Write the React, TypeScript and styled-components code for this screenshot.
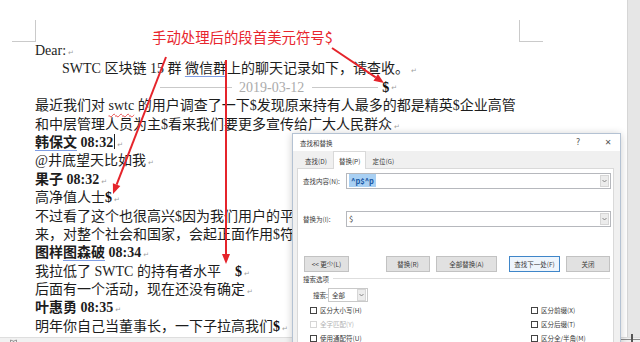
import React from "react";
import styled, { createGlobalStyle } from "styled-components";

const GlobalStyle = createGlobalStyle`
  html, body {
    margin: 0;
    padding: 0;
    background: #fff;
  }
  body {
    overflow: hidden;
  }
  * {
    box-sizing: border-box;
  }
`;

const Screen = styled.div`
  position: relative;
  width: 640px;
  height: 342px;
  overflow: hidden;
  display: flex;
  flex-direction: column;
  background: #fff;
`;

const Main = styled.div`
  height: 337px;
  flex-shrink: 0;
  display: flex;
`;

const Workspace = styled.div`
  flex: 1;
  min-width: 0;
  overflow: hidden;
  padding-top: 20px;
`;

const Gutter = styled.div`
  width: 13px;
  background: #e6e6e6;
  border-left: 1px solid #d6d6d6;
`;

const StatusBar = styled.div`
  height: 22px;
  flex-shrink: 0;
  display: flex;
  align-items: flex-start;
  justify-content: space-between;
  padding: 1px 0 0 10px;
  background: #f1f1f1;
  border-top: 1px solid #dedede;
`;

const ZoomSlider = styled.div`
  position: relative;
  width: 20px;
  height: 1px;
  background: #8a8a8a;

  &::after {
    content: "";
    position: absolute;
    left: 11px;
    top: -5px;
    width: 2px;
    height: 9px;
    background: #555;
  }
`;

/* ---------- document ---------- */

const MarginMarks = styled.div`
  display: flex;
  justify-content: space-between;
  width: 543px;
  padding-left: 12px;
`;

const CornerMark = styled.div<{ $side: "left" | "right" }>`
  width: 24px;
  height: 22px;
  border-bottom: 1px solid #cacaca;
  ${({ $side }) =>
    $side === "left"
      ? "border-right: 1px solid #cacaca;"
      : "border-left: 1px solid #cacaca;"}
`;

const TextBody = styled.div`
  padding-left: 35px;
  font-family: "Liberation Serif", "Noto Sans CJK SC", serif;
  font-size: 14px;
  color: #1d1d1d;
`;

const Line = styled.div<{ $indent?: boolean; $bold?: boolean }>`
  height: 18.4px;
  line-height: 18.4px;
  white-space: nowrap;
  font-weight: ${({ $bold }) => ($bold ? 700 : 400)};
  padding-left: ${({ $indent }) => ($indent ? "27px" : "0")};
`;

const DateLine = styled(Line)`
  display: flex;
  align-items: center;
  padding-left: 125px;
`;

const Rule = styled.span<{ $w: number }>`
  width: ${({ $w }) => $w}px;
  height: 1px;
  background: #c9c9c9;
`;

const DateText = styled.span`
  color: #ababab;
  margin: 0 8px 0 7px;
`;

const Dollar = styled.span<{ $gap?: number }>`
  font-weight: 700;
  color: #111;
  margin-left: ${({ $gap }) => $gap ?? 0}px;
`;

const ParaMark = styled.span`
  font-family: "DejaVu Sans", sans-serif;
  font-size: 7px;
  font-weight: 400;
  color: #a0a0a0;
  margin-left: 2px;
`;

const Grammar = styled.span`
  text-decoration: underline;
  text-decoration-color: #7f9de3;
  text-underline-offset: 3px;
`;

const Spelling = styled.span`
  text-decoration: underline wavy;
  text-decoration-color: #e84a4a;
  text-decoration-thickness: 1px;
  text-underline-offset: 3px;
`;

const Caret = styled.span`
  display: inline-block;
  width: 1px;
  height: 15px;
  margin-left: 1px;
  vertical-align: -2px;
  background: #222;
`;

/* ---------- annotation ---------- */

const Overlay = styled.svg`
  position: absolute;
  left: 0;
  top: 0;
  width: 640px;
  height: 342px;
  pointer-events: none;
`;

const Callout = styled.div`
  position: absolute;
  left: 152px;
  top: 28px;
  font-family: "Noto Sans CJK SC", sans-serif;
  font-size: 14.4px;
  line-height: 18px;
  color: #e8262e;
  white-space: nowrap;
`;

const ARROW = "#e5242b";

function Arrow({ x1, y1, x2, y2 }: { x1: number; y1: number; x2: number; y2: number }) {
  const len = Math.hypot(x2 - x1, y2 - y1);
  const ux = (x2 - x1) / len;
  const uy = (y2 - y1) / len;
  const bx = x2 - ux * 10;
  const by = y2 - uy * 10;
  const px = -uy * 4;
  const py = ux * 4;
  return (
    <g>
      <line x1={x1} y1={y1} x2={bx} y2={by} stroke={ARROW} strokeWidth={2} />
      <polygon
        points={`${x2},${y2} ${bx + px},${by + py} ${bx - px},${by - py}`}
        fill={ARROW}
      />
    </g>
  );
}

/* ---------- find & replace dialog ---------- */

const Dialog = styled.div`
  position: absolute;
  left: 292px;
  top: 133px;
  width: 329px;
  height: 222px;
  display: flex;
  flex-direction: column;
  background: #f0f0f0;
  border: 1px solid #b4c2d3;
  box-shadow: 0 1px 8px rgba(0, 0, 0, 0.2);
  font-family: "Noto Sans CJK SC", "Noto Sans", sans-serif;
  font-size: 6.5px;
  color: #3a3a3a;
`;

const TitleBar = styled.div`
  height: 17px;
  display: flex;
  align-items: center;
  padding-left: 7px;
  background: #fff;
`;

const Title = styled.span`
  flex: 1;
`;

const TitleButton = styled.span<{ $gap?: number }>`
  width: 24px;
  text-align: center;
  font-family: "DejaVu Sans", sans-serif;
  font-size: 8px;
  color: #555;
  margin-right: ${({ $gap }) => $gap ?? 0}px;
`;

const TabStrip = styled.div`
  height: 17px;
  display: flex;
  align-items: flex-end;
  padding-left: 6px;
`;

const Tab = styled.div<{ $active?: boolean }>`
  position: relative;
  z-index: 1;
  height: ${({ $active }) => ($active ? "18px" : "15px")};
  display: flex;
  align-items: center;
  padding: 0 5px;
  margin-bottom: ${({ $active }) => ($active ? "-1px" : "0")};
  background: ${({ $active }) => ($active ? "#fff" : "transparent")};
  border: 1px solid ${({ $active }) => ($active ? "#d9d9d9" : "transparent")};
  border-bottom: none;
`;

const TabPanel = styled.div`
  flex: 1;
  margin: 0 6px 0 4px;
  padding: 4px 2px 0 5px;
  background: #fff;
  border: 1px solid #d9d9d9;
`;

const FieldRow = styled.div<{ $top?: number }>`
  height: 16px;
  display: flex;
  align-items: center;
  margin-top: ${({ $top }) => $top ?? 0}px;
`;

const FieldLabel = styled.span`
  flex: 0 0 43px;
  white-space: nowrap;
  line-height: 10px;
`;

const ComboBox = styled.div`
  flex: 1;
  min-width: 0;
  height: 16px;
  display: flex;
  align-items: center;
  border: 1px solid #b6b8bd;
  background: #fff;
`;

const ComboText = styled.span`
  flex: 1;
  padding-left: 2px;
  font-size: 7.5px;
  line-height: 10px;
`;

const Selected = styled.span`
  padding: 1px 2px;
  background: #a9d0f3;
  color: #1b5aa6;
  font-weight: 700;
`;

const DropButton = styled.span`
  flex-shrink: 0;
  width: 9px;
  height: 12px;
  margin-right: 1px;
  display: flex;
  align-items: center;
  justify-content: center;
  background: #ececec;
  border: 1px solid #d6d6d6;
`;

const ButtonRow = styled.div`
  display: flex;
  margin-top: 29px;
`;

const Button = styled.div<{ $w: number; $gap: number; $default?: boolean }>`
  width: ${({ $w }) => $w}px;
  height: 16px;
  margin-left: ${({ $gap }) => $gap}px;
  display: flex;
  align-items: center;
  justify-content: center;
  white-space: nowrap;
  background: ${({ $default }) => ($default ? "#eef5fc" : "#e1e1e1")};
  border: 1px solid ${({ $default }) => ($default ? "#3f86c9" : "#c2c2c2")};
`;

const OptionsHeader = styled.div`
  height: 11px;
  display: flex;
  align-items: center;
  margin-top: 1px;
`;

const Divider = styled.span`
  flex: 1;
  height: 1px;
  margin: 0 1px 0 4px;
  background: #dedede;
`;

const ScopeRow = styled.div`
  height: 14px;
  display: flex;
  align-items: center;
  margin-top: 4px;
  padding-left: 10px;
`;

const ScopeLabel = styled.span`
  flex: 0 0 15px;
  white-space: nowrap;
`;

const Select = styled.div`
  width: 40px;
  height: 14px;
  display: flex;
  align-items: center;
  border: 1px solid #c9c9c9;
  background: #fff;
`;

const SelectText = styled.span`
  flex: 1;
  padding-left: 3px;
`;

const CheckGrid = styled.div`
  display: grid;
  grid-template-columns: 221px 1fr;
  grid-auto-rows: 14px;
  margin-top: 1px;
  padding-left: 7px;
`;

const CheckItem = styled.label<{ $disabled?: boolean }>`
  display: flex;
  align-items: center;
  gap: 3px;
  color: ${({ $disabled }) => ($disabled ? "#b3b3b3" : "#3a3a3a")};
`;

const Box = styled.span<{ $disabled?: boolean }>`
  width: 7px;
  height: 7px;
  background: #fff;
  border: 1px solid ${({ $disabled }) => ($disabled ? "#d6d6d6" : "#444")};
`;

const Chevron = () => (
  <svg width="5" height="4" viewBox="0 0 5 4">
    <path d="M0.5 1 L2.5 3 L4.5 1" fill="none" stroke="#707070" strokeWidth="0.8" />
  </svg>
);

const ProofIcon = () => (
  <svg width="7" height="6" viewBox="0 0 7 6">
    <path d="M0.5 5.5 V1 L3.5 2.2 L6.5 1 V5.5 M3.5 2.2 V5.5" fill="none" stroke="#8c8c8c" strokeWidth="0.9" />
  </svg>
);

const mark = <ParaMark>↵</ParaMark>;

const checks: { label: string; disabled?: boolean }[] = [
  { label: "区分大小写(H)" },
  { label: "区分前缀(X)" },
  { label: "全字匹配(Y)", disabled: true },
  { label: "区分后缀(T)" },
  { label: "使用通配符(U)" },
  { label: "区分全/半角(M)" },
];

export default function App() {
  return (
    <>
      <GlobalStyle />
      <Screen>
        <Main>
          <Workspace>
            <MarginMarks>
              <CornerMark $side="left" />
              <CornerMark $side="right" />
            </MarginMarks>
            <TextBody>
              <Line>Dear:{mark}</Line>
              <Line $indent>
                SWTC 区块链 15 群 <Grammar>微信群</Grammar>上的聊天记录如下，请查收。{mark}
              </Line>
              <DateLine>
                <Rule $w={72} />
                <DateText>2019-03-12</DateText>
                <Rule $w={66} />
                <Dollar $gap={4}>$</Dollar>
                {mark}
              </DateLine>
              <Line>
                最近我们对 <Spelling>swtc</Spelling> 的用户调查了一下$发现原来持有人最多的都是精英$企业高管
              </Line>
              <Line>和中层管理人员为主$看来我们要更多宣传给广大人民群众{mark}</Line>
              <Line $bold>
                <Grammar>韩保文</Grammar> 08:32
                <Caret />
                {mark}
              </Line>
              <Line>@井底望天比如我{mark}</Line>
              <Line $bold>果子 08:32{mark}</Line>
              <Line>
                高净值人士<Dollar>$</Dollar>
                {mark}
              </Line>
              <Line>不过看了这个也很高兴$因为我们用户的平</Line>
              <Line>来，对整个社会和国家，会起正面作用$符</Line>
              <Line $bold>
                图样<Grammar>图森破</Grammar> 08:34{mark}
              </Line>
              <Line>
                我拉低了 SWTC 的持有者水平　<Dollar>$</Dollar>
                {mark}
              </Line>
              <Line>后面有一个活动，现在还没有确定{mark}</Line>
              <Line $bold>叶惠勇 08:35{mark}</Line>
              <Line>
                明年你自己当董事长，一下子拉高我们<Dollar>$</Dollar>
                {mark}
              </Line>
            </TextBody>
          </Workspace>
          <Gutter />
        </Main>
        <StatusBar>
          <ProofIcon />
          <ZoomSlider />
        </StatusBar>

        <Overlay viewBox="0 0 640 342">
          <Arrow x1={166} y1={57} x2={113} y2={194} />
          <Arrow x1={226} y1={60} x2={226} y2={264} />
          <Arrow x1={332} y1={48} x2={384} y2={83} />
        </Overlay>
        <Callout>手动处理后的段首美元符号$</Callout>

        <Dialog>
          <TitleBar>
            <Title>查找和替换</Title>
            <TitleButton $gap={6}>?</TitleButton>
            <TitleButton>✕</TitleButton>
          </TitleBar>
          <TabStrip>
            <Tab>查找(D)</Tab>
            <Tab $active>替换(P)</Tab>
            <Tab>定位(G)</Tab>
          </TabStrip>
          <TabPanel>
            <FieldRow>
              <FieldLabel>查找内容(N):</FieldLabel>
              <ComboBox>
                <ComboText>
                  <Selected>^p$^p</Selected>
                </ComboText>
                <DropButton>
                  <Chevron />
                </DropButton>
              </ComboBox>
            </FieldRow>
            <FieldRow $top={22}>
              <FieldLabel>替换为(I):</FieldLabel>
              <ComboBox>
                <ComboText>$</ComboText>
                <DropButton>
                  <Chevron />
                </DropButton>
              </ComboBox>
            </FieldRow>
            <ButtonRow>
              <Button $w={45} $gap={1}>&lt;&lt; 更少(L)</Button>
              <Button $w={44} $gap={37}>替换(R)</Button>
              <Button $w={61} $gap={6}>全部替换(A)</Button>
              <Button $w={51} $gap={12} $default>
                查找下一处(F)
              </Button>
              <Button $w={44} $gap={6}>关闭</Button>
            </ButtonRow>
            <OptionsHeader>
              搜索选项
              <Divider />
            </OptionsHeader>
            <ScopeRow>
              <ScopeLabel>搜索:</ScopeLabel>
              <Select>
                <SelectText>全部</SelectText>
                <DropButton>
                  <Chevron />
                </DropButton>
              </Select>
            </ScopeRow>
            <CheckGrid>
              {checks.map((c) => (
                <CheckItem key={c.label} $disabled={c.disabled}>
                  <Box $disabled={c.disabled} />
                  {c.label}
                </CheckItem>
              ))}
            </CheckGrid>
          </TabPanel>
        </Dialog>
      </Screen>
    </>
  );
}
